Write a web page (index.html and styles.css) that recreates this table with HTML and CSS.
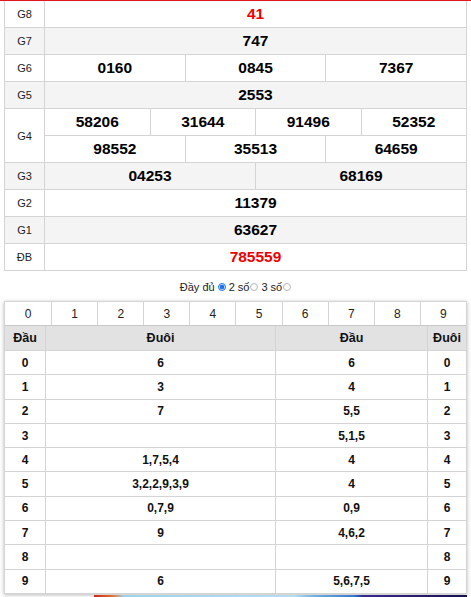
FILE: index.html
```html
<!DOCTYPE html>
<html>
<head>
<meta charset="utf-8">
<link rel="stylesheet" href="styles.css">
</head>
<body>
<div class="topline"></div>
<div class="page">
  <div class="kq">
    <div class="row white"><div class="lbl">G8</div><div class="cells"><div class="c red">41</div></div></div>
    <div class="row gray"><div class="lbl">G7</div><div class="cells"><div class="c">747</div></div></div>
    <div class="row white"><div class="lbl">G6</div><div class="cells"><div class="c">0160</div><div class="c">0845</div><div class="c">7367</div></div></div>
    <div class="row gray"><div class="lbl">G5</div><div class="cells"><div class="c">2553</div></div></div>
    <div class="row white double">
      <div class="lbl">G4</div>
      <div class="stack">
        <div class="cells sub"><div class="c">58206</div><div class="c">31644</div><div class="c">91496</div><div class="c">52352</div></div>
        <div class="cells"><div class="c">98552</div><div class="c">35513</div><div class="c">64659</div></div>
      </div>
    </div>
    <div class="row gray"><div class="lbl">G3</div><div class="cells"><div class="c">04253</div><div class="c">68169</div></div></div>
    <div class="row white"><div class="lbl">G2</div><div class="cells"><div class="c">11379</div></div></div>
    <div class="row gray"><div class="lbl">G1</div><div class="cells"><div class="c">63627</div></div></div>
    <div class="row white"><div class="lbl">ĐB</div><div class="cells"><div class="c red">785559</div></div></div>
  </div>

  <div class="opts">
    <span>Đầy đủ</span><span class="radio on sp"></span><span>2 số</span><span class="radio"></span><span class="gap">3 số</span><span class="radio"></span>
  </div>

  <div class="lower">
    <div class="digits">
      <div>0</div><div>1</div><div>2</div><div>3</div><div>4</div><div>5</div><div>6</div><div>7</div><div>8</div><div>9</div>
    </div>
    <div class="loto">
      <div class="lr head"><div>Đầu</div><div>Đuôi</div><div>Đầu</div><div>Đuôi</div></div>
      <div class="lr"><div>0</div><div>6</div><div>6</div><div>0</div></div>
      <div class="lr"><div>1</div><div>3</div><div>4</div><div>1</div></div>
      <div class="lr"><div>2</div><div>7</div><div>5,5</div><div>2</div></div>
      <div class="lr"><div>3</div><div></div><div>5,1,5</div><div>3</div></div>
      <div class="lr"><div>4</div><div>1,7,5,4</div><div>4</div><div>4</div></div>
      <div class="lr"><div>5</div><div>3,2,2,9,3,9</div><div>4</div><div>5</div></div>
      <div class="lr"><div>6</div><div>0,7,9</div><div>0,9</div><div>6</div></div>
      <div class="lr"><div>7</div><div>9</div><div>4,6,2</div><div>7</div></div>
      <div class="lr"><div>8</div><div></div><div></div><div>8</div></div>
      <div class="lr"><div>9</div><div>6</div><div>5,6,7,5</div><div>9</div></div>
    </div>
  </div>
  <div class="banner"></div>
</div>
</body>
</html>
```

FILE: styles.css
```css
* { box-sizing: border-box; }
html, body { margin: 0; padding: 0; background: #fff; }
body {
  font-family: "Liberation Sans", Arial, sans-serif;
  color: #111;
  width: 471px;
  height: 597px;
  overflow: hidden;
}
.topline { height: 1px; background: #e8141c; }
.page { padding: 0 4px; }

.kq {
  width: 463px;
  border-left: 1px solid #d4d4d4;
  border-right: 1px solid #d4d4d4;
}
.row {
  display: flex;
  height: 27px;
  border-bottom: 1px solid #d4d4d4;
}
.row.double { height: 54px; }
.row.gray { background: #f4f4f4; }
.lbl {
  width: 40px;
  flex: none;
  border-right: 1px solid #d4d4d4;
  display: flex;
  align-items: center;
  justify-content: center;
  font-size: 11px;
  color: #222;
}
.stack { flex: 1; display: flex; flex-direction: column; }
.stack .cells { height: 26px; }
.stack .cells.sub { height: 27px; border-bottom: 1px solid #d4d4d4; }
.cells { flex: 1; display: flex; }
.c {
  flex: 1;
  display: flex;
  align-items: center;
  justify-content: center;
  font-weight: bold;
  font-size: 15.5px;
  color: #000;
}
.c + .c { border-left: 1px solid #d4d4d4; }
.c.red { color: #e00; }

.opts {
  height: 30px;
  display: flex;
  align-items: center;
  justify-content: center;
  font-size: 11px;
  color: #222;
  padding-top: 1px;
}
.radio {
  width: 8px;
  height: 8px;
  border-radius: 50%;
  border: 1px solid #b5b5b5;
  background: #fff;
  margin-left: 1px;
}
.radio.sp { margin: 0 3px; }
.gap { margin-left: 3px; }
.radio.on {
  border-color: #1a73e8;
  background: radial-gradient(circle, #1a73e8 0 2px, #cfe0fb 2.5px);
}

.lower {
  width: 463px;
  box-shadow: 0 1px 4px rgba(0, 0, 0, 0.28);
}
.digits {
  display: grid;
  grid-template-columns: repeat(10, 1fr);
  height: 24px;
  border: 1px solid #d4d4d4;
  border-bottom: none;
}
.digits div {
  display: flex;
  align-items: center;
  justify-content: center;
  font-size: 12px;
  color: #222;
}
.digits div + div { border-left: 1px solid #d4d4d4; }

.loto {
  border-left: 1px solid #d4d4d4;
  border-right: 1px solid #d4d4d4;
}
.lr {
  display: grid;
  grid-template-columns: 40px 230px 152px 1fr;
  height: 24.3px;
  border-bottom: 1px solid #d4d4d4;
  font-size: 12px;
  font-weight: bold;
}
.lr.head {
  height: 26px;
  background: #e2e2e2;
  border-top: 1px solid #c8c8c8;
  font-size: 12.5px;
}
.lr div {
  display: flex;
  align-items: center;
  justify-content: center;
  border-left: 1px solid #d4d4d4;
}
.lr div:first-child { border-left: none; }

.banner {
  margin-left: 90px;
  margin-top: 1px;
  height: 4px;
  background: linear-gradient(90deg, #c8281c 0, #e2702c 18px, #9fd2ea 30px, #b6dcee 200px, #6fb2de 220px, #3b76c8 260px, #2a4fb0 265px, #3a2a8c 268px, #2a1d6e 320px, #141050 377px);
}
```
